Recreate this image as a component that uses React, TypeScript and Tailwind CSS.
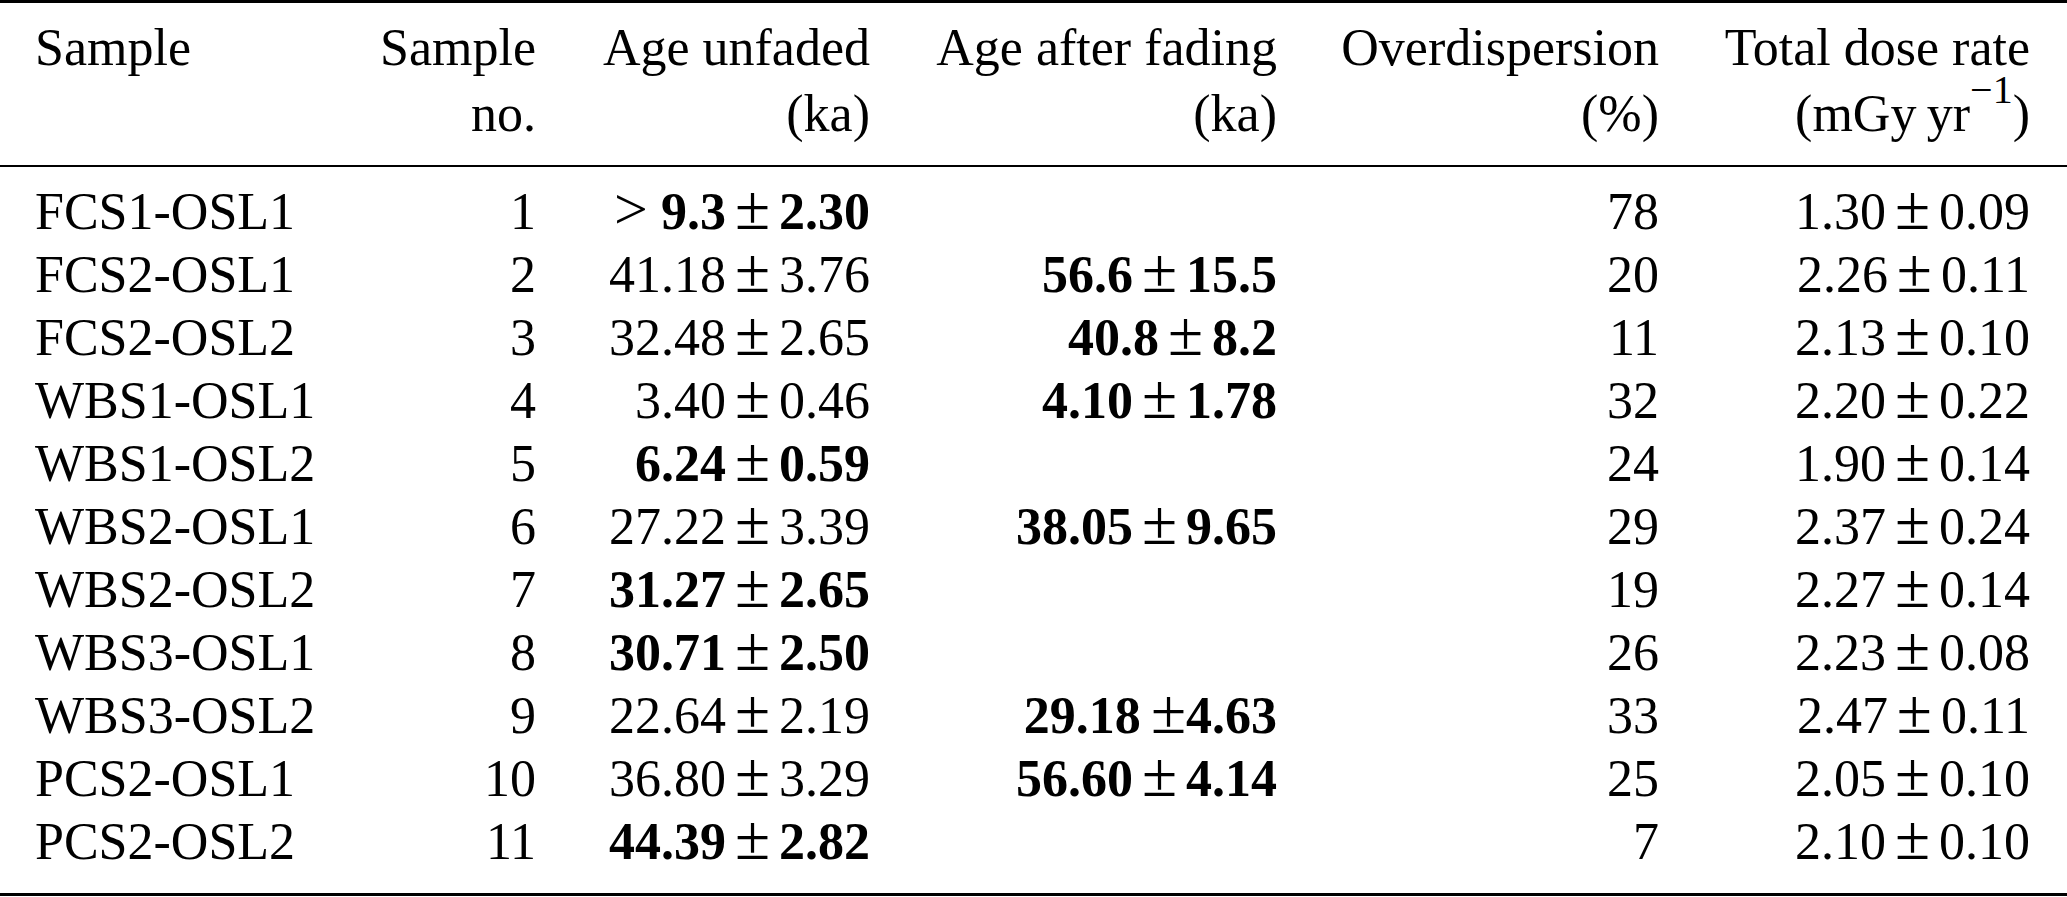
import React from "react"

type Val = { v: string; e: string; bold?: boolean; gt?: boolean; tight?: boolean }

type Row = {
  sample: string
  no: number
  unfaded: Val
  faded?: Val
  od: number
  dose: Val
}

const rows: Row[] = [
  { sample: "FCS1-OSL1", no: 1, unfaded: { v: "9.3", e: "2.30", bold: true, gt: true }, od: 78, dose: { v: "1.30", e: "0.09" } },
  { sample: "FCS2-OSL1", no: 2, unfaded: { v: "41.18", e: "3.76" }, faded: { v: "56.6", e: "15.5", bold: true }, od: 20, dose: { v: "2.26", e: "0.11" } },
  { sample: "FCS2-OSL2", no: 3, unfaded: { v: "32.48", e: "2.65" }, faded: { v: "40.8", e: "8.2", bold: true }, od: 11, dose: { v: "2.13", e: "0.10" } },
  { sample: "WBS1-OSL1", no: 4, unfaded: { v: "3.40", e: "0.46" }, faded: { v: "4.10", e: "1.78", bold: true }, od: 32, dose: { v: "2.20", e: "0.22" } },
  { sample: "WBS1-OSL2", no: 5, unfaded: { v: "6.24", e: "0.59", bold: true }, od: 24, dose: { v: "1.90", e: "0.14" } },
  { sample: "WBS2-OSL1", no: 6, unfaded: { v: "27.22", e: "3.39" }, faded: { v: "38.05", e: "9.65", bold: true }, od: 29, dose: { v: "2.37", e: "0.24" } },
  { sample: "WBS2-OSL2", no: 7, unfaded: { v: "31.27", e: "2.65", bold: true }, od: 19, dose: { v: "2.27", e: "0.14" } },
  { sample: "WBS3-OSL1", no: 8, unfaded: { v: "30.71", e: "2.50", bold: true }, od: 26, dose: { v: "2.23", e: "0.08" } },
  { sample: "WBS3-OSL2", no: 9, unfaded: { v: "22.64", e: "2.19" }, faded: { v: "29.18", e: "4.63", bold: true, tight: true }, od: 33, dose: { v: "2.47", e: "0.11" } },
  { sample: "PCS2-OSL1", no: 10, unfaded: { v: "36.80", e: "3.29" }, faded: { v: "56.60", e: "4.14", bold: true }, od: 25, dose: { v: "2.05", e: "0.10" } },
  { sample: "PCS2-OSL2", no: 11, unfaded: { v: "44.39", e: "2.82", bold: true }, od: 7, dose: { v: "2.10", e: "0.10" } },
]

const cols = "grid grid-cols-[345px_156px_334px_407px_382px_371px] pl-[35px] pr-[37px]"

function PlusMinus({ val }: { val?: Val }) {
  if (!val) return <span />
  const w = val.bold ? "font-bold" : ""
  return (
    <span className="whitespace-nowrap">
      {val.gt && <span className="text-[60px] leading-[0px] mr-[0.22em]">&gt;</span>}
      <span className={w}>{val.v}</span>
      <span className={`text-[64px] leading-[0px] ${val.tight ? "ml-[0.16em]" : "mx-[0.14em]"}`}>±</span>
      <span className={w}>{val.e}</span>
    </span>
  )
}

function HeadCell({ top, bottom, left }: { top: string; bottom?: React.ReactNode; left?: boolean }) {
  return (
    <div className={`flex flex-col ${left ? "items-start" : "items-end"}`}>
      <span className="h-[66px] leading-[66px] whitespace-nowrap">{top}</span>
      <span className="h-[66px] leading-[66px] whitespace-nowrap">{bottom}</span>
    </div>
  )
}

export default function App() {
  return (
    <div className="w-[2067px] h-[897px] bg-white text-black text-[52px] font-['Liberation_Serif','Times_New_Roman',serif] flex flex-col">
      {/* top rule */}
      <div className="h-[3px] bg-black" />

      {/* header */}
      <div className={`${cols} pt-[12px] pb-[18px]`}>
        <HeadCell top="Sample" left />
        <HeadCell top="Sample" bottom="no." />
        <HeadCell top="Age unfaded" bottom="(ka)" />
        <HeadCell top="Age after fading" bottom="(ka)" />
        <HeadCell top="Overdispersion" bottom="(%)" />
        <HeadCell
          top="Total dose rate"
          bottom={
            <>
              (mGy<span className="ml-[0.2em]">yr</span>
              <sup className="text-[40px] leading-[0px] -top-[0.7em]">−1</sup>)
            </>
          }
        />
      </div>

      {/* mid rule */}
      <div className="h-[2px] bg-black" />

      {/* body */}
      <div className="pt-[13px] pb-[20px]">
        {rows.map((r) => (
          <div key={r.sample} className={`${cols} h-[63px] leading-[63px]`}>
            <span className="whitespace-nowrap">{r.sample}</span>
            <span className="text-right">{r.no}</span>
            <span className="text-right"><PlusMinus val={r.unfaded} /></span>
            <span className="text-right"><PlusMinus val={r.faded} /></span>
            <span className="text-right">{r.od}</span>
            <span className="text-right"><PlusMinus val={r.dose} /></span>
          </div>
        ))}
      </div>

      {/* bottom rule */}
      <div className="h-[3px] bg-black" />
    </div>
  )
}
